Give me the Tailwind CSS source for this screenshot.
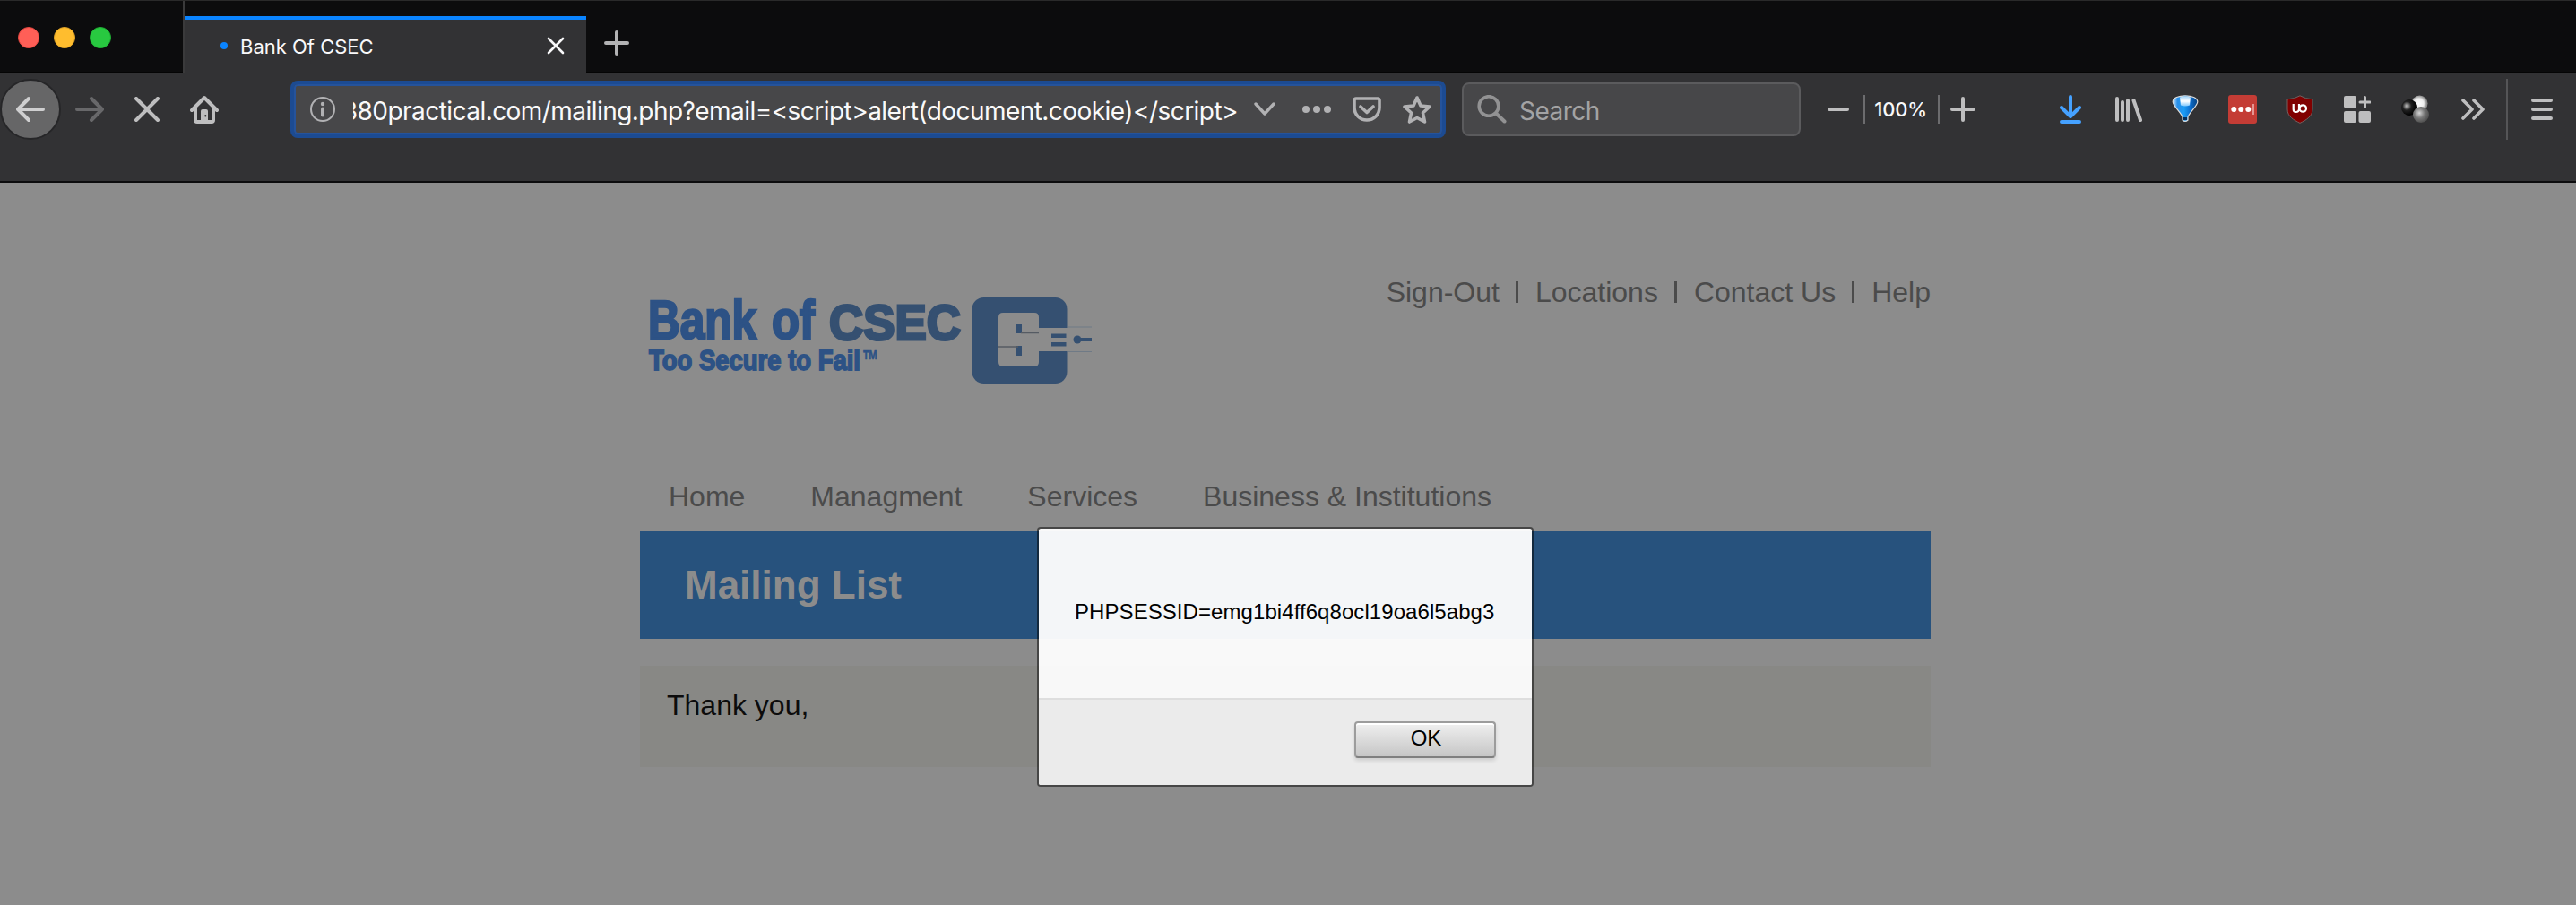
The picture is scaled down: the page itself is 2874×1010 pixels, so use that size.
<!DOCTYPE html>
<html lang="en">
<head>
<meta charset="utf-8">
<title>Bank Of CSEC</title>
<script src="https://cdn.jsdelivr.net/npm/@tailwindcss/browser@4"></script>
</head>
<body class="flex h-[1010px] w-[2874px] flex-col overflow-hidden bg-[#8c8c8c] font-['Liberation_Sans',Arial,sans-serif]">

<!-- Tab strip -->
<div class="flex h-[82px] shrink-0 border-t border-[#2a2a2a] bg-[#0c0c0d] font-[Inter,sans-serif] shadow-[inset_0_-2px_0_#050505]">
  <div class="flex w-[206px] items-center gap-4 border-r-2 border-[#3a3a3b] pl-5">
    <span class="size-6 rounded-full border border-[#e2463f] bg-[#ff5f57]"></span>
    <span class="size-6 rounded-full border border-[#e1a325] bg-[#ffbd2e]"></span>
    <span class="size-6 rounded-full border border-[#1fae33] bg-[#28c940]"></span>
  </div>
  <div class="mt-[17px] flex w-[448px] items-center border-t-4 border-[#0a84ff] bg-[#323234] pl-10 pr-6">
    <span class="mt-[-3px] size-2 rounded-full bg-[#0a84ff]"></span>
    <span class="ml-[14px] mt-[-1px] flex-1 whitespace-nowrap text-[22px] leading-7 text-[#f9f9fa]">Bank Of CSEC</span>
    <svg class="mt-[-3px] h-5 w-5" viewBox="0 0 20 20" fill="none" stroke="#f9f9fa" stroke-width="2.6" stroke-linecap="round"><path d="M2 2l16 16M18 2L2 18"/></svg>
  </div>
  <svg class="ml-5 mt-[33px] size-7" viewBox="0 0 28 28" fill="none" stroke="#b3b3b4" stroke-width="4" stroke-linecap="round"><path d="M14 2v24M2 14h24"/></svg>
</div>

<!-- Toolbar -->
<div class="h-[122px] shrink-0 border-b-2 border-[#0c0c0d] bg-[#323234] font-[Inter,sans-serif]">
  <div class="flex h-20 items-center">
    <span class="flex size-[68px] items-center justify-center rounded-full border-2 border-[#262628] bg-[#666667]">
      <svg class="size-8" viewBox="0 0 32 32" fill="none" stroke="#cfcfd0" stroke-width="4" stroke-linecap="round" stroke-linejoin="round"><path d="M30 16H3M14 4L2 16l12 12"/></svg>
    </span>
    <svg class="ml-4 size-8" viewBox="0 0 32 32" fill="none" stroke="#68686a" stroke-width="4" stroke-linecap="round" stroke-linejoin="round"><path d="M2 16h27M18 4l12 12-12 12"/></svg>
    <svg class="ml-[34px] size-7" viewBox="0 0 28 28" fill="none" stroke="#bebebf" stroke-width="4" stroke-linecap="round"><path d="M2 2l24 24M26 2L2 26"/></svg>
    <svg class="ml-[34px] size-8" viewBox="0 0 32 32" fill="none" stroke="#bebebf" stroke-width="4" stroke-linecap="round" stroke-linejoin="round"><path d="M2 17L16 3l14 14M6 15v13q0 2 2 2h16q2 0 2-2V15"/><path d="M12 29V18q0-2 2-2h4q2 0 2 2v11z" fill="#bebebf" stroke="none"/><path d="M17.300 23v.6" stroke="#323234" stroke-width="2"/></svg>

    <div class="ml-20 flex h-16 w-[1289px] items-center rounded-lg border-4 border-[#1c4b92] bg-[#474749] shadow-[inset_0_0_0_2px_#25539b]">
      <svg class="ml-[18px] size-7 shrink-0" viewBox="0 0 28 28"><circle cx="14" cy="14" r="13" fill="none" stroke="#b1b1b3" stroke-width="2"/><circle cx="14" cy="8" r="2.200" fill="#b1b1b3"/><path d="M14 13.500v7" stroke="#b1b1b3" stroke-width="4" stroke-linecap="round"/></svg>
      <div class="ml-5 mt-[3px] flex w-[987px] justify-end overflow-hidden whitespace-nowrap text-[28px] leading-[42px] text-[#f9f9fa]"><span class="tracking-[-0.55px]">380practical.com/mailing.php?email=&lt;script&gt;alert(document.cookie)&lt;/script&gt;</span></div>
      <svg class="ml-[18px] h-4 w-6 shrink-0" viewBox="0 0 24 16" fill="none" stroke="#b1b1b3" stroke-width="3.400" stroke-linecap="round" stroke-linejoin="round"><path d="M2 2l10 11L22 2"/></svg>
      <svg class="ml-[30px] h-2 w-8 shrink-0" viewBox="0 0 32 8" fill="#b1b1b3"><circle cx="4" cy="4" r="4"/><circle cx="16" cy="4" r="4"/><circle cx="28" cy="4" r="4"/></svg>
      <svg class="ml-[24px] h-7 w-8 shrink-0" viewBox="0 0 32 28" fill="none" stroke="#b1b1b3" stroke-width="3.600" stroke-linecap="round" stroke-linejoin="round"><path d="M4 2h24q2 0 2 2v8a14 14 0 0 1-28 0V4q0-2 2-2z"/><path d="M9 11l7 6.500 7-6.500"/></svg>
      <svg class="ml-[24px] size-8 shrink-0" viewBox="0 0 32 32" fill="none" stroke="#b1b1b3" stroke-width="3.600" stroke-linejoin="round"><path d="M16 3l4 9 10 1-7.500 7 2 10L16 25.500 7.500 30l2-10L2 13l10-1z"/></svg>
    </div>

    <div class="ml-[18px] flex h-[60px] w-[378px] items-center rounded-lg border-2 border-[#5b5b5d] bg-[#474749]">
      <svg class="ml-[15px] h-8 w-[33px]" viewBox="0 0 33 32" fill="none" stroke="#929293" stroke-linecap="round"><circle cx="13" cy="12.500" r="10.800" stroke-width="3.600"/><path d="M21 20.500l9.500 9" stroke-width="4"/></svg>
      <span class="ml-[14px] mt-[3px] text-[28px] leading-[42px] tracking-[-0.5px] text-[#a3a3a4]">Search</span>
    </div>

    <span class="ml-[30px] h-1 w-6 rounded-full bg-[#bebebf]"></span>
    <span class="ml-4 h-8 w-0.5 bg-[#6c6c6e]"></span>
    <span class="w-[81px] pr-0.5 text-center text-[22px] font-medium leading-7 tracking-[-0.2px] text-[#f9f9fa]">100%</span>
    <span class="h-8 w-0.5 bg-[#6c6c6e]"></span>
    <svg class="ml-3 size-7" viewBox="0 0 28 28" fill="none" stroke="#bebebf" stroke-width="4" stroke-linecap="round"><path d="M14 2v24M2 14h24"/></svg>

    <!-- Downloads -->
    <svg class="ml-[94px] h-8 w-6" viewBox="0 0 24 32" fill="none" stroke="#45a1ff" stroke-width="4" stroke-linecap="round" stroke-linejoin="round"><path d="M12 2v22M2 14l10 10 10-10M2 30h20"/></svg>
    <!-- Library -->
    <svg class="ml-[38px] h-7 w-[30px]" viewBox="0 0 30 28" fill="none" stroke="#bebebf" stroke-width="4" stroke-linecap="round"><path d="M2 2v24M8 6v20M14 4v22M20.500 4L28 26"/></svg>
    <!-- Balloon -->
    <svg class="ml-[33px] h-8 w-[30px]" viewBox="0 0 30 32">
      <defs><linearGradient id="bal" x1="0" x2="1"><stop offset="0" stop-color="#d9efff"/><stop offset=".18" stop-color="#2a8fe8"/><stop offset=".45" stop-color="#1c9cf5"/><stop offset=".7" stop-color="#0c6fd0"/><stop offset="1" stop-color="#08427f"/></linearGradient>
      <linearGradient id="shine" x2="0" y2="1"><stop offset="0" stop-color="#a9d8fb"/><stop offset=".5" stop-color="#fff"/><stop offset="1" stop-color="#7cc6fb"/></linearGradient></defs>
      <path d="M15 .8C8 .8 1.200 3 1.200 7.500c0 4.500 8.300 11 10.800 17v3.500q3 3 6 0v-3.500c2.500-6 10.800-12.500 10.800-17C28.800 3 22 .8 15 .8z" fill="url(#bal)" stroke="#dcdcdc" stroke-width="1.200"/>
      <path d="M9 2.500q6-2 12 0l-1 9q-5 2-10 0z" fill="url(#shine)"/>
      <path d="M13 25h4v3h-4z" fill="#062f5c"/>
    </svg>
    <!-- Password manager -->
    <svg class="ml-[33px] size-8" viewBox="0 0 32 32"><rect width="32" height="32" rx="3" fill="#c43c35"/><circle cx="6.300" cy="16" r="3" fill="#fff"/><circle cx="14.300" cy="16" r="3" fill="#fff"/><circle cx="22.300" cy="16" r="3" fill="#fff"/><path d="M28 10v12" stroke="#f0b5b2" stroke-width="1.500"/></svg>
    <!-- Shield -->
    <svg class="ml-8 size-8" viewBox="0 0 32 32"><path d="M16 .8Q22 4.500 30 4.800V16c0 8-7 12-14 15.400C9 28 2 24 2 16V4.800Q10 4.500 16 .8z" fill="#800000" stroke="#75605f" stroke-width="1"/><path d="M8.700 10v6q0 3 3 3t3.300-3V10M15 14v4" fill="none" stroke="#fff" stroke-width="2.200"/><circle cx="19.300" cy="15" r="3.700" fill="none" stroke="#fff" stroke-width="2.200"/></svg>
    <!-- Containers -->
    <svg class="ml-[33px] size-[30px]" viewBox="0 0 30 30" fill="#bebebf"><rect width="14" height="13.500" rx="2"/><rect y="17" width="14" height="13" rx="2"/><rect x="16.500" y="17" width="13.500" height="13" rx="2"/><path d="M23.500 1.500v11M18 7h11" stroke="#bebebf" stroke-width="3" stroke-linecap="round"/></svg>
    <!-- Spheres -->
    <svg class="ml-[33px] size-8" viewBox="0 0 32 32">
      <defs><radialGradient id="s1" cx=".45" cy=".5"><stop offset="0" stop-color="#fff"/><stop offset=".6" stop-color="#eee"/><stop offset="1" stop-color="#8a8a8a"/></radialGradient>
      <radialGradient id="s2" cx=".35" cy=".4" r=".6"><stop offset="0" stop-color="#ccc"/><stop offset=".45" stop-color="#222"/><stop offset="1" stop-color="#000"/></radialGradient>
      <radialGradient id="s3" cx=".4" cy=".4" r=".65"><stop offset="0" stop-color="#d5d5d5"/><stop offset=".5" stop-color="#777"/><stop offset="1" stop-color="#4a4a4a"/></radialGradient></defs>
      <circle cx="21.500" cy="9.500" r="9" fill="url(#s1)"/><circle cx="10" cy="14" r="9" fill="url(#s2)"/><circle cx="23" cy="22" r="9" fill="url(#s3)"/>
    </svg>
    <!-- Overflow -->
    <svg class="ml-9 h-6 w-[26px]" viewBox="0 0 26 24" fill="none" stroke="#bebebf" stroke-width="3.600" stroke-linecap="round" stroke-linejoin="round"><path d="M2 2l10 10L2 22M14 2l10 10-10 10"/></svg>
    <span class="ml-6 h-[68px] w-0.5 bg-[#555557]"></span>
    <span class="ml-[26px] flex w-6 flex-col gap-1.5"><span class="h-1 rounded-full bg-[#bebebf]"></span><span class="h-1 rounded-full bg-[#bebebf]"></span><span class="h-1 rounded-full bg-[#bebebf]"></span></span>
  </div>
</div>

<!-- Page -->
<main class="relative ml-[714px] h-[806px] w-[1440px] text-[32px] text-[#4b4b4b]">
  <header class="flex h-[332px] justify-between">
    <svg class="ml-1 mt-[116px] h-[120px] w-[510px]" viewBox="718 320 510 120" font-family="'Liberation Sans', Arial, sans-serif" font-weight="700">
      <g fill="#2d5285" stroke="#2d5285">
        <text x="723" y="377.500" font-size="61" stroke-width="2.600" textLength="121" lengthAdjust="spacingAndGlyphs">Bank</text>
        <text x="861" y="377.500" font-size="61" stroke-width="2.600" textLength="48" lengthAdjust="spacingAndGlyphs">of</text>
        <text x="724" y="413" font-size="32" stroke-width="1.800" textLength="236" lengthAdjust="spacingAndGlyphs">Too Secure to Fail</text>
        <text x="962" y="413" font-size="32" stroke-width=".6" textLength="18" lengthAdjust="spacingAndGlyphs">™</text>
      </g>
      <text x="925" y="378.500" font-size="56" fill="#355071" stroke="#355071" stroke-width="3" textLength="147" lengthAdjust="spacingAndGlyphs">CSEC</text>
      <rect x="1084.500" y="332" width="106" height="96" rx="13" fill="#355071"/>
      <path d="M1191 365h27M1191 392.500h27" stroke="#6f7a86" stroke-width="1"/>
      <path d="M1119 349h35q5 0 5 5v12h59v26h-59v12q0 5-5 5h-35q-5 0-5-5v-50q0-5 5-5z" fill="#8c8c8c"/>
      <path d="M1133 362h7v10h-7zM1133 386h7v11h-7zM1173 372.500h16.500v4.500H1173zM1173 382h16.500v4.500H1173z" fill="#355071"/>
      <path d="M1139 371.500h20M1114 387h22" stroke="#555b63" stroke-width="1.500"/>
      <circle cx="1202" cy="379" r="4.500" fill="#355071"/><path d="M1203 379h15" stroke="#355071" stroke-width="4"/>
    </svg>
    <nav class="mt-[104px] flex h-9 items-center whitespace-nowrap leading-9">
      <span>Sign-Out</span><span class="ml-[18px] mr-[19px] h-6 w-[3px] bg-[#4b4b4b]"></span>
      <span>Locations</span><span class="ml-[18px] mr-[19px] h-6 w-[3px] bg-[#4b4b4b]"></span>
      <span>Contact Us</span><span class="ml-[18px] mr-[19px] h-6 w-[3px] bg-[#4b4b4b]"></span>
      <span>Help</span>
    </nav>
  </header>
  <nav class="flex h-[57px] gap-[73px] whitespace-nowrap pl-[32px] leading-9">
    <span>Home</span><span>Managment</span><span>Services</span><span>Business &amp; Institutions</span>
  </nav>
  <h1 class="flex h-[120px] items-center bg-[#27527d] pl-[50px] text-[44px] font-bold text-[#8c8c8c]">Mailing List</h1>
  <section class="mt-[30px] h-[113px] bg-[#888885] pl-[30px] pt-[26px] leading-9 text-[#0c0c0c]">Thank you,</section>

  <!-- Alert dialog -->
  <div class="absolute left-[443px] top-[384px] flex h-[290px] w-[554px] flex-col overflow-hidden rounded-[4px] border-2 border-black/50 bg-[#fdfdfd]/96 bg-clip-padding text-[24px] text-black">
    <div class="h-[189px] pl-[40px] pt-[79px] leading-7"><span class="whitespace-nowrap tracking-[0.07px]">PHPSESSID=emg1bi4ff6q8ocl19oa6l5abg3</span></div>
    <div class="flex flex-1 justify-end border-t-2 border-[#dedede] bg-[#ebebeb] pr-[40px] pt-6">
      <button class="h-[41px] w-[158px] rounded-[4px] border-2 border-[#9c9c9c] border-b-[#7f7f7f] bg-linear-to-b from-[#f0f0f0] to-[#c6c6c6] pb-1 pl-0.5 text-[24px] leading-[32px] shadow-[inset_0_2px_0_#fff,0_3px_4px_rgba(0,0,0,0.12)]">OK</button>
    </div>
  </div>
</main>
</body>
</html>
